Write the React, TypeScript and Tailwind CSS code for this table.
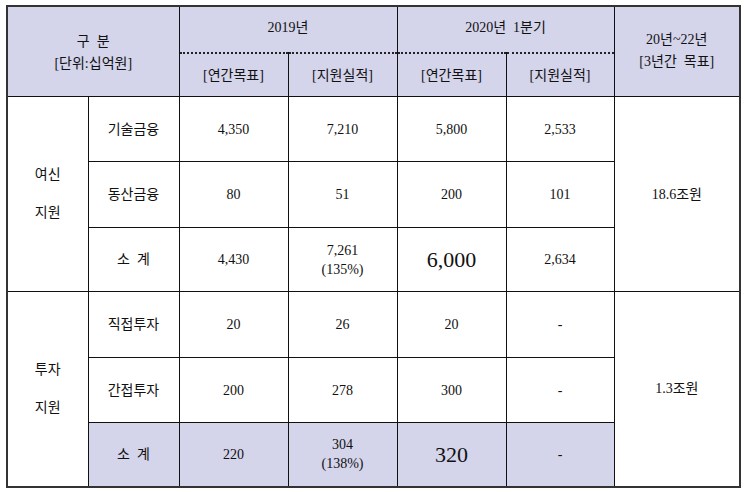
import React from "react";

const font = { fontFamily: '"Liberation Serif", "Noto Sans CJK KR", serif' };

const td = "border-[1.5px] border-[#111] text-center align-middle text-[14px] text-[#111] p-0";
const hd = "bg-[#d4d4eb]";

function Big({ v }: { v: string }) {
  return <span className="text-[22px]">{v}</span>;
}

function Sub({ children }: { children: React.ReactNode }) {
  return (
    <td className={`${td} ${hd} border-t-0 align-top`}>
      <div className="flex h-[44px] flex-col">
        <div className="h-0 w-full shrink-0 border-t-2 border-dotted border-[#222]" />
        <div className="flex flex-1 items-center justify-center">{children}</div>
      </div>
    </td>
  );
}

export default function App() {
  return (
    <div className="w-[745px] h-[492px] bg-white pt-[5px] pl-[6px]" style={font}>
      <table className="table-fixed border-collapse border-2 border-[#333] w-[733px]">
        <colgroup>
          <col className="w-[81px]" />
          <col className="w-[91px]" />
          <col className="w-[109px]" />
          <col className="w-[109px]" />
          <col className="w-[109px]" />
          <col className="w-[108px]" />
          <col className="w-[126px]" />
        </colgroup>
        <tbody>
          <tr className="h-[46px]">
            <td rowSpan={2} colSpan={2} className={`${td} ${hd}`}>
              <div className="leading-[22px] pt-[2px]">
                <div>구&nbsp;&nbsp;분</div>
                <div>[단위:십억원]</div>
              </div>
            </td>
            <td colSpan={2} className={`${td} ${hd} border-b-0`}>
              <div className="pb-[4px]">2019년</div>
            </td>
            <td colSpan={2} className={`${td} ${hd} border-b-0`}>
              <div className="pb-[4px]">2020년&nbsp;&nbsp;1분기</div>
            </td>
            <td rowSpan={2} className={`${td} ${hd}`}>
              <div className="leading-[22px] pb-[2px]">
                <div>20년~22년</div>
                <div>[3년간&nbsp;&nbsp;목표]</div>
              </div>
            </td>
          </tr>
          <tr className="h-[44px]">
            <Sub>[연간목표]</Sub>
            <Sub>[지원실적]</Sub>
            <Sub>[연간목표]</Sub>
            <Sub>[지원실적]</Sub>
          </tr>

          <tr className="h-[65px]">
            <td rowSpan={3} className={td}>
              <div className="leading-[38px]">
                <div>여신</div>
                <div>지원</div>
              </div>
            </td>
            <td className={td}>기술금융</td>
            <td className={td}>4,350</td>
            <td className={td}>7,210</td>
            <td className={td}>5,800</td>
            <td className={td}>2,533</td>
            <td rowSpan={3} className={td}>18.6조원</td>
          </tr>
          <tr className="h-[66px]">
            <td className={td}>동산금융</td>
            <td className={td}>80</td>
            <td className={td}>51</td>
            <td className={td}>200</td>
            <td className={td}>101</td>
          </tr>
          <tr className="h-[64px]">
            <td className={td}>소&nbsp;&nbsp;계</td>
            <td className={td}>4,430</td>
            <td className={td}>
              <div className="leading-[19px]">
                <div>7,261</div>
                <div>(135%)</div>
              </div>
            </td>
            <td className={td}><Big v="6,000" /></td>
            <td className={td}>2,634</td>
          </tr>

          <tr className="h-[66px]">
            <td rowSpan={3} className={td}>
              <div className="leading-[38px]">
                <div>투자</div>
                <div>지원</div>
              </div>
            </td>
            <td className={td}>직접투자</td>
            <td className={td}>20</td>
            <td className={td}>26</td>
            <td className={td}>20</td>
            <td className={td}>-</td>
            <td rowSpan={3} className={td}>1.3조원</td>
          </tr>
          <tr className="h-[65px]">
            <td className={td}>간접투자</td>
            <td className={td}>200</td>
            <td className={td}>278</td>
            <td className={td}>300</td>
            <td className={td}>-</td>
          </tr>
          <tr className="h-[64px]">
            <td className={`${td} ${hd}`}>소&nbsp;&nbsp;계</td>
            <td className={`${td} ${hd}`}>220</td>
            <td className={`${td} ${hd}`}>
              <div className="leading-[19px]">
                <div>304</div>
                <div>(138%)</div>
              </div>
            </td>
            <td className={`${td} ${hd}`}><Big v="320" /></td>
            <td className={`${td} ${hd}`}>-</td>
          </tr>
        </tbody>
      </table>
    </div>
  );
}
